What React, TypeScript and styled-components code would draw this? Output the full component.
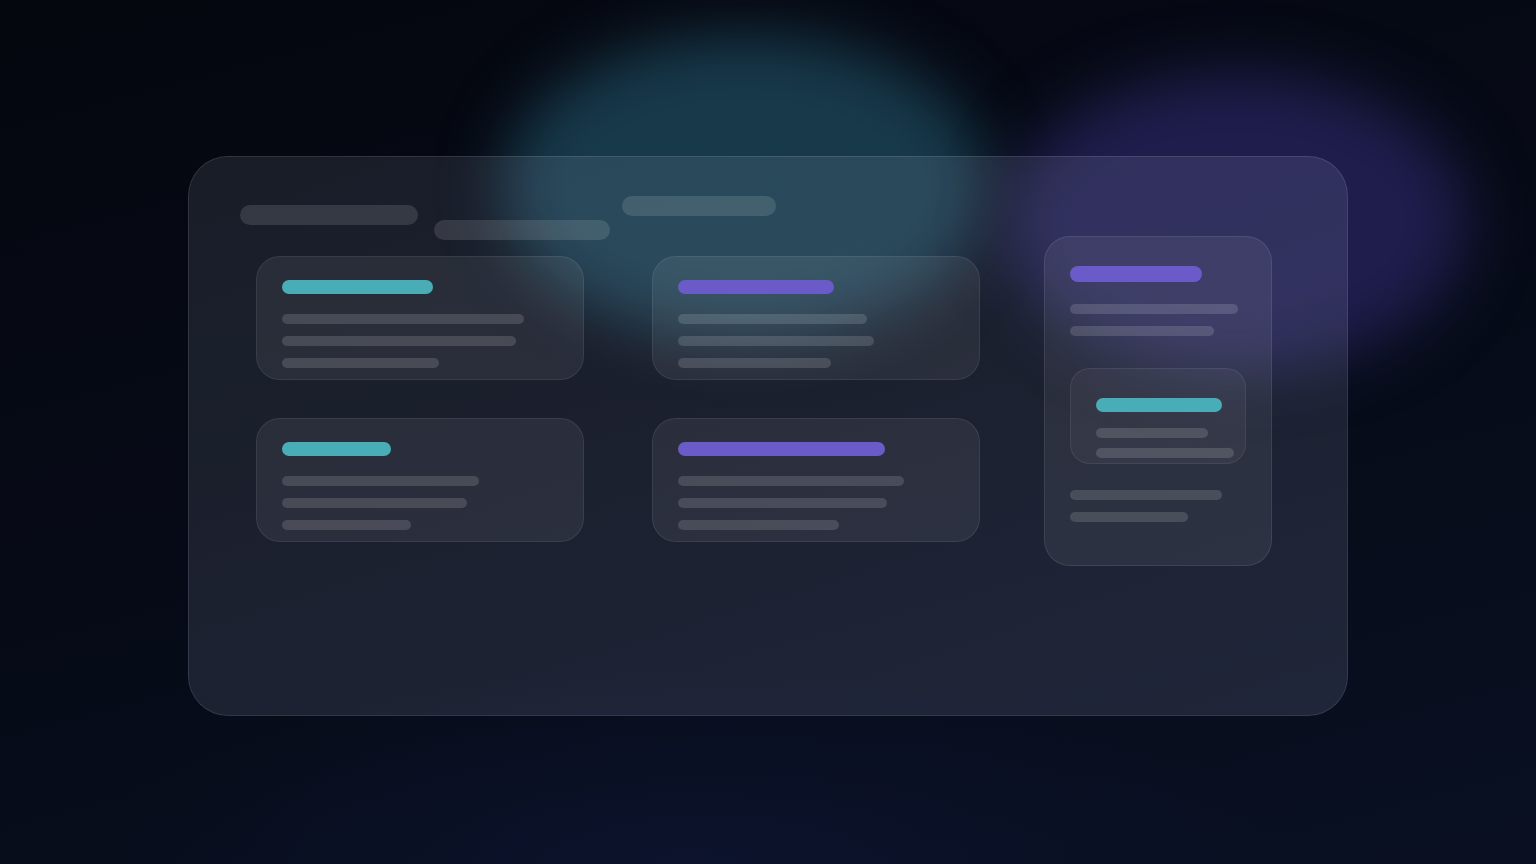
import React from "react";
import styled, { createGlobalStyle } from "styled-components";

const GlobalStyle = createGlobalStyle`
  html, body { margin: 0; padding: 0; }
  body {
    font-family: Inter, "Noto Sans", sans-serif;
    background: #060a16;
  }
`;

const Page = styled.div`
  position: relative;
  width: 100%;
  min-height: 100vh;
  overflow: hidden;
  box-sizing: border-box;
  padding: 156px 188px 0;
  background:
    radial-gradient(ellipse 800px 260px at 45% 100%, rgba(16, 24, 58, 0.5), transparent 75%),
    linear-gradient(165deg, #05070f 0%, #060a16 45%, #091022 100%);
`;

const Backdrop = styled.div`
  position: absolute;
  inset: 0;
  pointer-events: none;
  z-index: 0;
`;

const Blob = styled.div<{ $x: number; $y: number; $w: number; $h: number; $color: string }>`
  position: absolute;
  left: ${(p) => p.$x}px;
  top: ${(p) => p.$y}px;
  width: ${(p) => p.$w}px;
  height: ${(p) => p.$h}px;
  border-radius: 50%;
  background: ${(p) => p.$color};
  filter: blur(30px);
`;

const Panel = styled.div`
  position: relative;
  z-index: 1;
  width: 1160px;
  height: 560px;
  box-sizing: border-box;
  padding: 39px 51px;
  border-radius: 40px;
  border: 1px solid rgba(255, 255, 255, 0.1);
  background: linear-gradient(160deg, rgba(220, 230, 255, 0.095), rgba(200, 215, 255, 0.12));
`;

const Header = styled.div`
  display: flex;
  align-items: flex-start;
  height: 40px;
`;

const Pill = styled.div<{ $w: number; $top: number; $gap: number }>`
  width: ${(p) => p.$w}px;
  height: 20px;
  margin-top: ${(p) => p.$top}px;
  margin-left: ${(p) => p.$gap}px;
  border-radius: 10px;
  background: rgba(255, 255, 255, 0.12);
  flex-shrink: 0;
`;

const Body = styled.div`
  display: flex;
  align-items: flex-start;
`;

const Grid = styled.div`
  display: grid;
  grid-template-columns: 328px 328px;
  column-gap: 68px;
  row-gap: 38px;
  margin-top: 20px;
  margin-left: 16px;
`;

const Card = styled.div`
  box-sizing: border-box;
  height: 124px;
  padding: 23px 25px 12px;
  border-radius: 24px;
  border: 1px solid rgba(255, 255, 255, 0.08);
  background: rgba(255, 255, 255, 0.065);
  display: flex;
  flex-direction: column;
`;

const Title = styled.div<{ $w: number; $tone: "teal" | "purple"; $h?: number }>`
  width: ${(p) => p.$w}px;
  height: ${(p) => p.$h ?? 14}px;
  border-radius: ${(p) => (p.$h ?? 14) / 2}px;
  background: ${(p) => (p.$tone === "teal" ? "#48adb7" : "#6b5bc8")};
  flex-shrink: 0;
`;

const Lines = styled.div<{ $top: number; $gap: number }>`
  display: flex;
  flex-direction: column;
  gap: ${(p) => p.$gap}px;
  margin-top: ${(p) => p.$top}px;
`;

const Line = styled.div<{ $w: number }>`
  width: ${(p) => p.$w}px;
  height: 10px;
  border-radius: 5px;
  background: rgba(255, 255, 255, 0.14);
`;

const SideCard = styled.div`
  box-sizing: border-box;
  width: 228px;
  height: 330px;
  margin-left: 64px;
  padding: 29px 25px;
  border-radius: 26px;
  border: 1px solid rgba(255, 255, 255, 0.09);
  background: rgba(255, 255, 255, 0.065);
  display: flex;
  flex-direction: column;
`;

const InnerCard = styled.div`
  box-sizing: border-box;
  width: 176px;
  height: 96px;
  margin-top: 32px;
  padding: 29px 25px 0;
  border-radius: 20px;
  border: 1px solid rgba(255, 255, 255, 0.07);
  background: rgba(255, 255, 255, 0.045);
  display: flex;
  flex-direction: column;
`;

type CardData = { title: number; tone: "teal" | "purple"; lines: number[] };

const cards: CardData[] = [
  { title: 151, tone: "teal", lines: [242, 234, 157] },
  { title: 156, tone: "purple", lines: [189, 196, 153] },
  { title: 109, tone: "teal", lines: [197, 185, 129] },
  { title: 207, tone: "purple", lines: [226, 209, 161] },
];

export default function App() {
  return (
    <>
      <GlobalStyle />
      <Page>
        <Backdrop>
          <Blob $x={502} $y={34} $w={486} $h={304} $color="#17394a" />
          <Blob $x={1004} $y={72} $w={464} $h={300} $color="#1f1d4c" />
        </Backdrop>
        <Panel>
          <Header>
            <Pill $w={178} $top={9} $gap={0} />
            <Pill $w={176} $top={24} $gap={16} />
            <Pill $w={154} $top={0} $gap={12} />
          </Header>
          <Body>
            <Grid>
              {cards.map((c, i) => (
                <Card key={i}>
                  <Title $w={c.title} $tone={c.tone} />
                  <Lines $top={20} $gap={12}>
                    {c.lines.map((w, j) => (
                      <Line key={j} $w={w} />
                    ))}
                  </Lines>
                </Card>
              ))}
            </Grid>
            <SideCard>
              <Title $w={132} $h={16} $tone="purple" />
              <Lines $top={22} $gap={12}>
                <Line $w={168} />
                <Line $w={144} />
              </Lines>
              <InnerCard>
                <Title $w={126} $tone="teal" />
                <Lines $top={16} $gap={10}>
                  <Line $w={112} />
                  <Line $w={138} />
                </Lines>
              </InnerCard>
              <Lines $top={26} $gap={12}>
                <Line $w={152} />
                <Line $w={118} />
              </Lines>
            </SideCard>
          </Body>
        </Panel>
      </Page>
    </>
  );
}
